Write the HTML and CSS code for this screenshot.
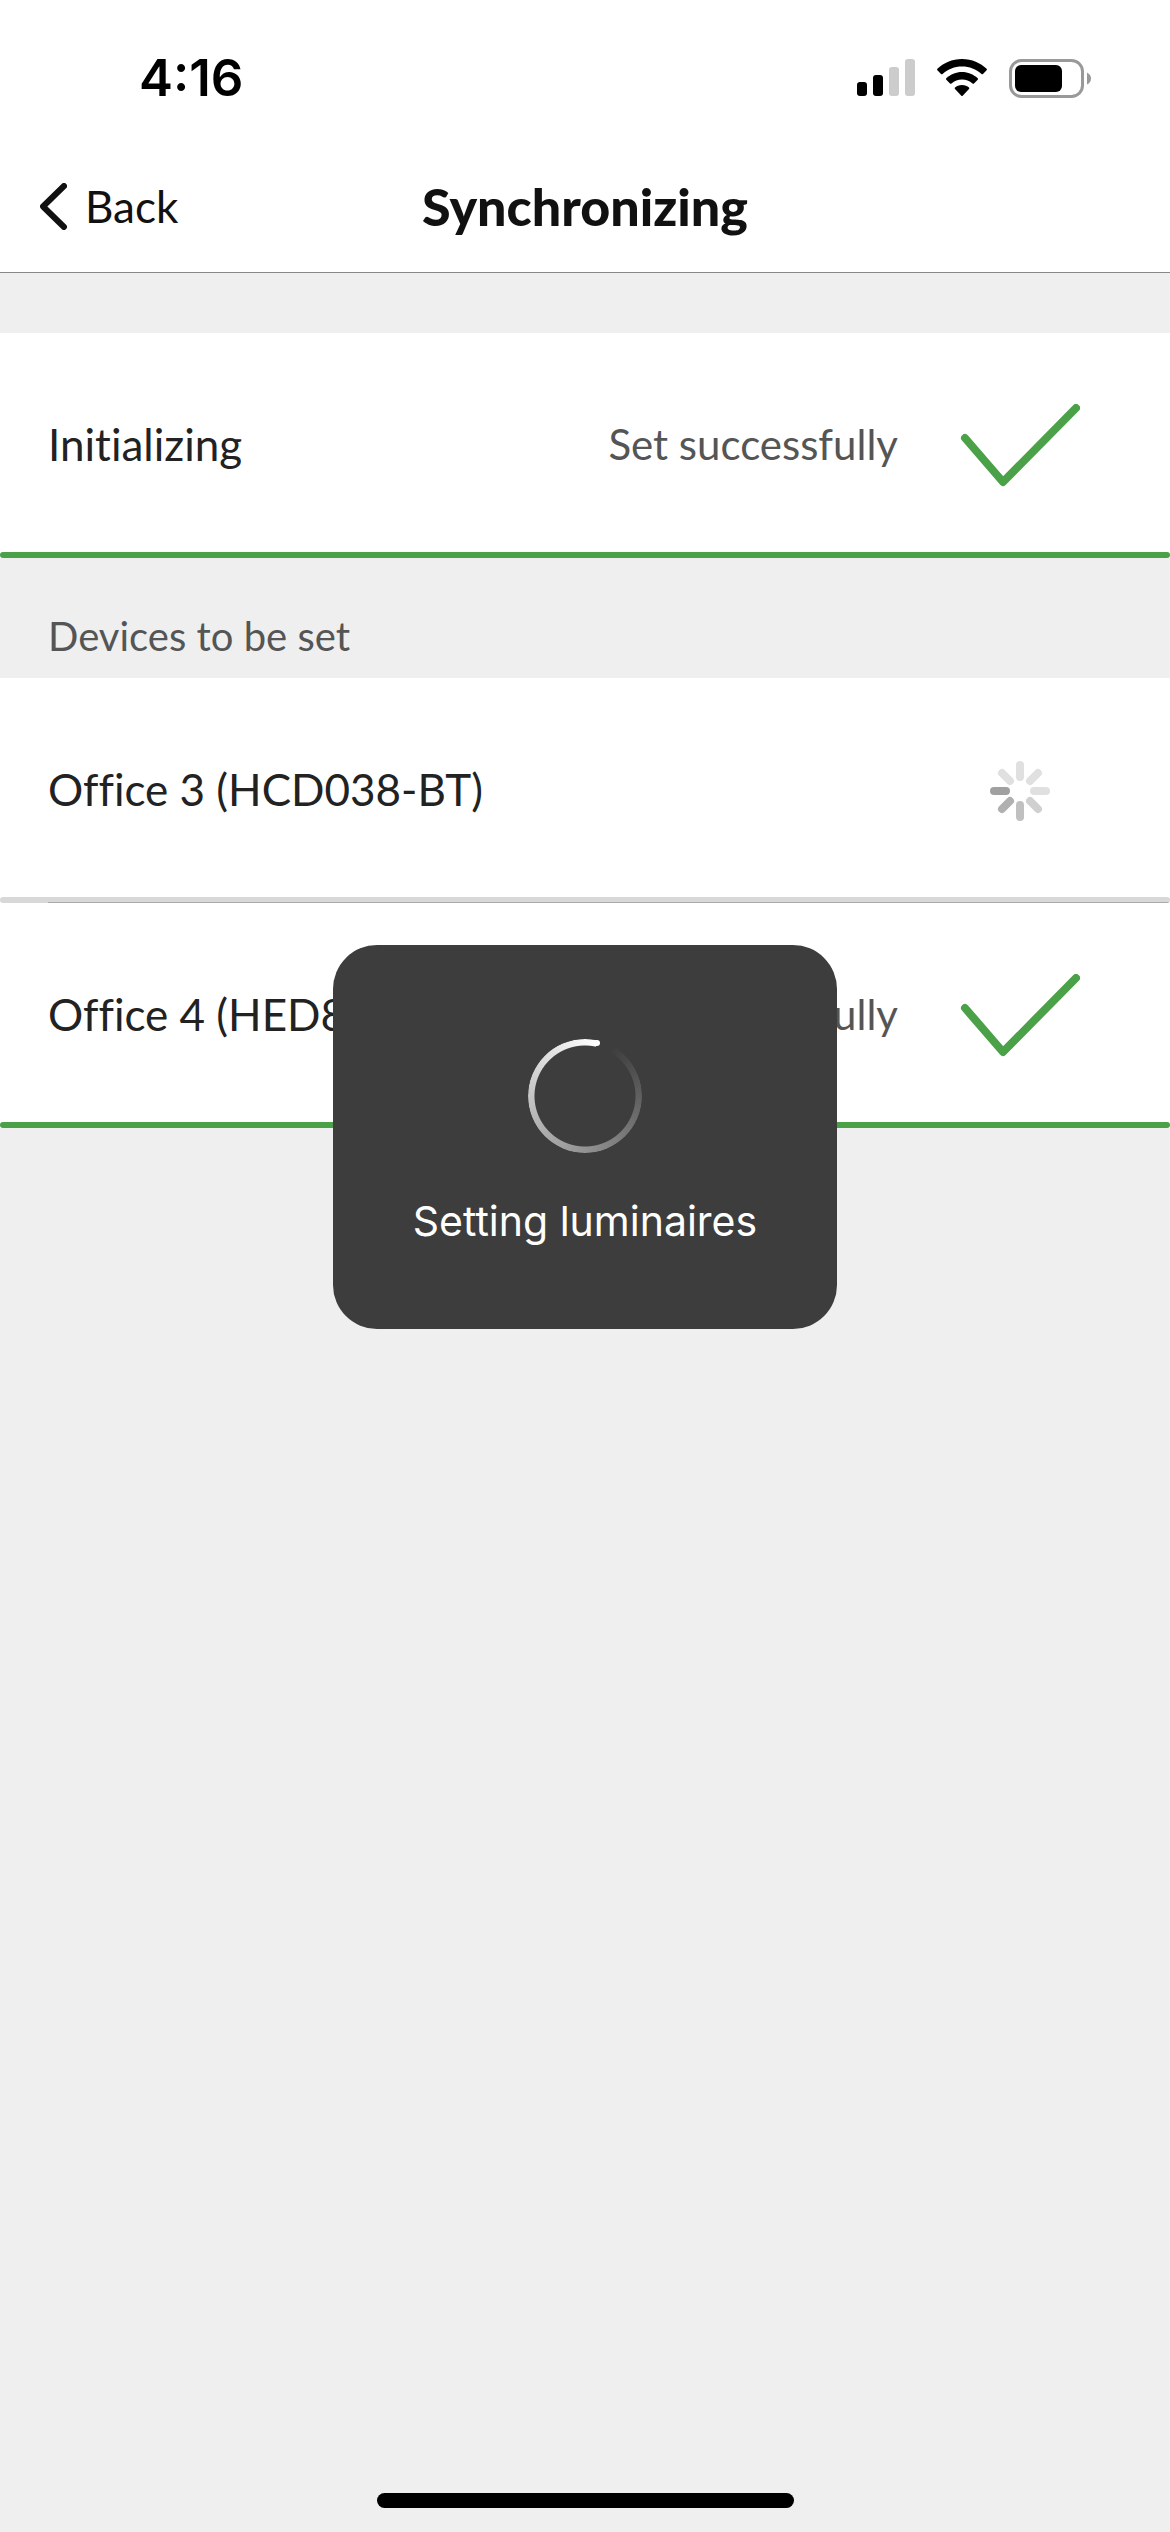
FILE: index.html
```html
<!DOCTYPE html>
<html lang="en">
<head>
<meta charset="utf-8">
<meta name="viewport" content="width=device-width, initial-scale=1">
<title>Synchronizing</title>
<link rel="stylesheet" href="styles.css">
</head>
<body>
<svg class="defs" aria-hidden="true">
  <symbol id="check" viewBox="0 0 120 84">
    <path d="M5 34 43 78 116 4" fill="none" stroke="currentColor" stroke-width="8" stroke-linecap="round" stroke-linejoin="round"/>
  </symbol>
</svg>
<div class="screen">
  <header class="header">
    <div class="status-bar">
      <time class="clock">4:16</time>
      <div class="status-icons">
        <svg width="58" height="38" viewBox="0 0 58 38" role="img" aria-label="Signal">
          <rect x="0" y="23" width="10" height="14" rx="3"/>
          <rect x="16" y="16" width="10" height="21" rx="3"/>
          <rect x="32" y="8" width="10" height="29" rx="3" fill="#ccc"/>
          <rect x="48" y="0" width="10" height="37" rx="3" fill="#ccc"/>
        </svg>
        <svg width="50" height="38" viewBox="0 0 50 38" role="img" aria-label="Wi-Fi">
          <path d="M25 0C35 0 43.500 4 49.600 9.800Q50.300 10.600 49.600 11.300L46 15Q45.300 15.700 44.500 15C39 10.200 32.500 7.600 25 7.600S11 10.200 5.500 15Q4.700 15.700 4 15L.4 11.300Q-.3 10.600 .4 9.800C6.500 4 15 0 25 0Z"/>
          <path d="M25 13C31 13 36.500 15.400 40.700 19.200Q41.500 20 40.700 20.700L37 24.400Q36.300 25 35.500 24.400C32.500 21.900 29 20.500 25 20.500S17.500 21.900 14.500 24.400Q13.700 25 13 24.400L9.300 20.700Q8.500 20 9.300 19.200C13.500 15.400 19 13 25 13Z"/>
          <path d="M25 26C28 26 30.300 27 32 28.500Q32.700 29.200 32 30L25.700 36.700Q25 37.400 24.300 36.700L18 30Q17.300 29.200 18 28.500C19.700 27 22 26 25 26Z"/>
        </svg>
        <svg width="82" height="39" viewBox="0 0 82 39" role="img" aria-label="Battery">
          <rect x="1.500" y="1.500" width="72" height="36" rx="11" fill="none" stroke="#999" stroke-width="3"/>
          <rect x="6" y="6" width="47" height="27" rx="6"/>
          <path d="M78 13.500Q82 15.500 82 19.500T78 25.500Z" fill="#999"/>
        </svg>
      </div>
    </div>
    <nav class="nav-bar">
      <button class="back" type="button">
        <svg width="27" height="47" viewBox="0 0 27 47" aria-hidden="true">
          <path d="M24 3 3 23.500 24 44" fill="none" stroke="currentColor" stroke-width="6" stroke-linecap="round" stroke-linejoin="round"/>
        </svg>
        Back
      </button>
      <h1 class="title">Synchronizing</h1>
    </nav>
  </header>

  <main class="content">
    <ul class="list">
      <li class="row row-done">
        <span class="name">Initializing</span>
        <span class="state">Set successfully</span>
        <svg class="check" role="img" aria-label="Done"><use href="#check"/></svg>
      </li>
    </ul>
    <h2 class="section-title">Devices to be set</h2>
    <ul class="list">
      <li class="row row-pending">
        <span class="name">Office 3 (HCD038-BT)</span>
        <svg class="spinner" viewBox="-60 -42 120 84" role="img" aria-label="In progress">
          <g stroke-width="8" stroke-linecap="round">
            <path d="M0-14V-26" stroke="#e0e0e0"/>
            <path d="M10-10 18-18" stroke="#e0e0e0"/>
            <path d="M14 0H26" stroke="#e0e0e0"/>
            <path d="M10 10 18 18" stroke="#d0d0d0"/>
            <path d="M0 14V26" stroke="#c0c0c0"/>
            <path d="M-10 10-18 18" stroke="#b0b0b0"/>
            <path d="M-14 0H-26" stroke="#a0a0a0"/>
            <path d="M-10-10-18-18" stroke="#e0e0e0"/>
          </g>
        </svg>
      </li>
      <li class="row row-done">
        <span class="name">Office 4 (HED8</span>
        <span class="state">Set successfully</span>
        <svg class="check" role="img" aria-label="Done"><use href="#check"/></svg>
      </li>
    </ul>
  </main>
  <div class="home-indicator"></div>

  <div class="hud" role="status">
    <div class="ring"></div>
    <p class="hud-text">Setting luminaires</p>
  </div>
</div>
</body>
</html>
```
FILE: styles.css
```css
* {
  box-sizing: border-box;
}

body {
  margin: 0;
  background: #efefef;
  color: #222;
  font-family: Lato, "Open Sans", sans-serif;
  font-variant-ligatures: none;
}

h1, h2, p, ul {
  margin: 0;
  padding: 0;
}

.defs {
  position: absolute;
  width: 0;
  height: 0;
}

.screen {
  position: relative;
  display: flex;
  flex-direction: column;
  min-height: 100vh;
}

.header {
  background: #fff;
  border-bottom: 1px solid #888;
}

.status-bar {
  display: flex;
  align-items: center;
  justify-content: space-between;
  height: 156px;
  padding: 0 79px 0 139px;
}

.clock {
  color: #000;
  font: 600 51px/60px Inter, sans-serif;
}

.status-icons {
  display: flex;
  align-items: center;
  gap: 22px;
}

.nav-bar {
  display: grid;
  grid-template-columns: 1fr auto 1fr;
  align-items: center;
  height: 116px;
  padding: 0 40px;
  color: #111;
}

.back {
  display: flex;
  align-items: center;
  gap: 18px;
  justify-self: start;
  padding: 0 0 16px;
  border: 0;
  background: none;
  color: inherit;
  font: 400 44px/60px Lato, sans-serif;
}

.title {
  padding-bottom: 16px;
  font-size: 52px;
  font-weight: 900;
  line-height: 60px;
}

.content {
  flex: 1;
  padding-top: 60px;
}

.list {
  list-style: none;
}

.row {
  position: relative;
  display: flex;
  align-items: center;
  height: 225px;
  padding: 0 90px 0 48px;
  background: #fff;
}

.row::after {
  content: "";
  position: absolute;
  inset: auto 0 0;
  height: 6px;
  border-radius: 3px;
}

.row-done::after {
  background: #4aa147;
}

.row-pending::after {
  background: linear-gradient(#aaa, #aaa) 48px 100% / 100% 1px no-repeat #d8d8d8;
}

.name {
  flex: 1;
  padding-bottom: 4px;
  font-size: 44px;
  line-height: 60px;
}

.state {
  margin-right: 62px;
  padding-bottom: 4px;
  color: #555;
  font-size: 42px;
  line-height: 60px;
}

.check,
.spinner {
  width: 120px;
  height: 84px;
  color: #4aa147;
}

.section-title {
  padding: 48px 48px 12px;
  color: #555;
  font-size: 40px;
  font-weight: 400;
  line-height: 60px;
}

.home-indicator {
  align-self: center;
  width: 417px;
  height: 15px;
  margin-bottom: 24px;
  border-radius: 8px;
  background: #000;
}

.hud {
  position: absolute;
  top: 945px;
  left: 50%;
  display: flex;
  flex-direction: column;
  align-items: center;
  gap: 38px;
  width: 504px;
  margin-left: -252px;
  padding: 94px 24px 78px;
  border-radius: 44px;
  background: #3d3d3d;
  color: #fff;
}

.ring {
  position: relative;
  width: 114px;
  height: 114px;
}

.ring::before {
  content: "";
  position: absolute;
  inset: 0;
  border-radius: 50%;
  background: conic-gradient(from 13deg, transparent 4%, #fff);
  mask: radial-gradient(circle closest-side, transparent 50px, #000 51px);
}

.ring::after {
  content: "";
  position: absolute;
  top: 1px;
  left: 66px;
  width: 6px;
  height: 6px;
  border-radius: 50%;
  background: #fff;
}

.hud-text {
  font: 400 41px/60px Inter, sans-serif;
}
```
